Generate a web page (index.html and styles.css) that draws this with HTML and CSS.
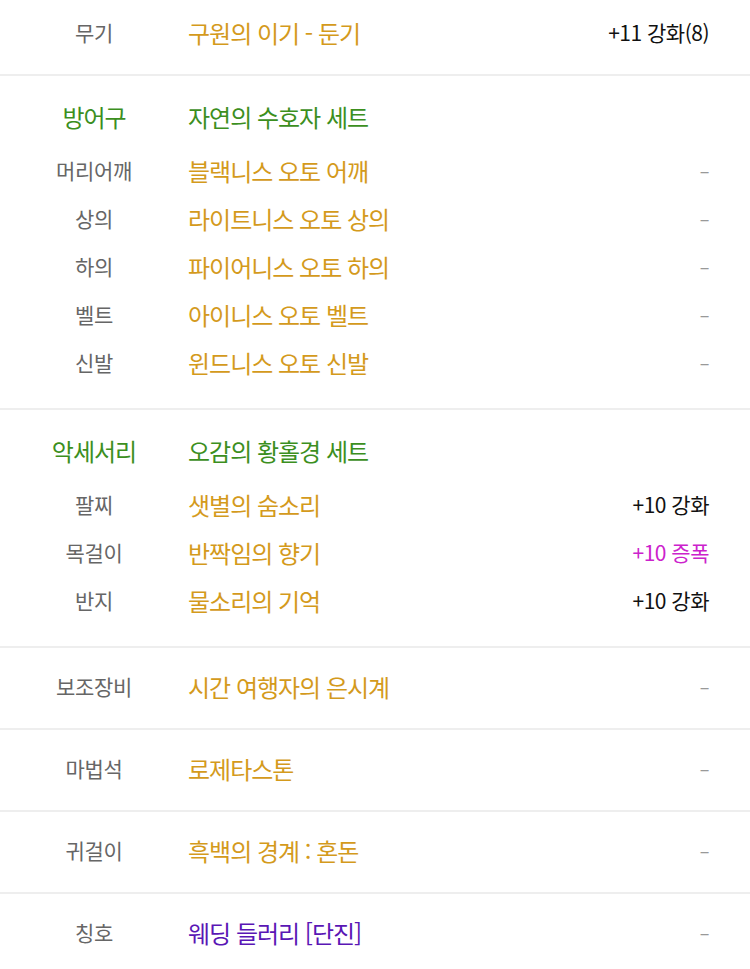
FILE: index.html
```html
<!DOCTYPE html>
<html lang="ko">
  <head>
    <meta charset="UTF-8" />
    <meta name="viewport" content="width=device-width, initial-scale=1.0" />
    <title>장비 정보</title>
    <link rel="stylesheet" href="styles.css">
  </head>
  <body>
    <div class="equip-list">
      <!-- 무기 -->
      <div class="group single">
        <div class="row">
          <span class="slot">무기</span>
          <span class="name gold">구원의 이기 - 둔기</span>
          <span class="value">+11 강화(8)</span>
        </div>
      </div>

      <!-- 방어구 세트 -->
      <div class="group set">
        <div class="row head">
          <span class="slot green">방어구</span>
          <span class="name green">자연의 수호자 세트</span>
          <span class="value"></span>
        </div>
        <div class="row">
          <span class="slot">머리어깨</span>
          <span class="name gold">블랙니스 오토 어깨</span>
          <span class="value dash">–</span>
        </div>
        <div class="row">
          <span class="slot">상의</span>
          <span class="name gold">라이트니스 오토 상의</span>
          <span class="value dash">–</span>
        </div>
        <div class="row">
          <span class="slot">하의</span>
          <span class="name gold">파이어니스 오토 하의</span>
          <span class="value dash">–</span>
        </div>
        <div class="row">
          <span class="slot">벨트</span>
          <span class="name gold">아이니스 오토 벨트</span>
          <span class="value dash">–</span>
        </div>
        <div class="row">
          <span class="slot">신발</span>
          <span class="name gold">윈드니스 오토 신발</span>
          <span class="value dash">–</span>
        </div>
      </div>

      <!-- 악세서리 세트 -->
      <div class="group set">
        <div class="row head">
          <span class="slot green">악세서리</span>
          <span class="name green">오감의 황홀경 세트</span>
          <span class="value"></span>
        </div>
        <div class="row">
          <span class="slot">팔찌</span>
          <span class="name gold">샛별의 숨소리</span>
          <span class="value">+10 강화</span>
        </div>
        <div class="row">
          <span class="slot">목걸이</span>
          <span class="name gold">반짝임의 향기</span>
          <span class="value amp">+10 증폭</span>
        </div>
        <div class="row">
          <span class="slot">반지</span>
          <span class="name gold">물소리의 기억</span>
          <span class="value">+10 강화</span>
        </div>
      </div>

      <div class="group single">
        <div class="row">
          <span class="slot">보조장비</span>
          <span class="name gold">시간 여행자의 은시계</span>
          <span class="value dash">–</span>
        </div>
      </div>

      <div class="group single">
        <div class="row">
          <span class="slot">마법석</span>
          <span class="name gold">로제타스톤</span>
          <span class="value dash">–</span>
        </div>
      </div>

      <div class="group single">
        <div class="row">
          <span class="slot">귀걸이</span>
          <span class="name gold">흑백의 경계 : 혼돈</span>
          <span class="value dash">–</span>
        </div>
      </div>

      <div class="group single last">
        <div class="row">
          <span class="slot">칭호</span>
          <span class="name purple">웨딩 들러리 [단진]</span>
          <span class="value dash">–</span>
        </div>
      </div>
    </div>
  </body>
</html>
```

FILE: styles.css
```css
/* Base */
* {
  margin: 0;
  padding: 0;
  box-sizing: border-box;
}

body {
  font-family: "Noto Sans CJK KR", "Noto Sans", sans-serif;
  background-color: #fff;
  color: #222;
  overflow: hidden;
}

/* List */
.equip-list {
  margin-top: -6px;
}

.group {
  border-bottom: 2px solid #eeeeee;
}

.group.single .row {
  height: 80px;
}

.group.set {
  padding: 18px 0 20px;
}

.group.set .row.head {
  margin-bottom: 6px;
}

.group.last {
  border-bottom: none;
}

.row {
  display: grid;
  grid-template-columns: 188px 1fr auto;
  align-items: center;
  height: 48px;
  padding-right: 41px;
  padding-bottom: 4px;
}

.slot {
  text-align: center;
  font-size: 21px;
  color: #666;
  letter-spacing: -0.3px;
}

.name {
  font-size: 24px;
  letter-spacing: -1px;
}

.value {
  font-size: 21px;
  color: #111;
  letter-spacing: -0.5px;
  text-align: right;
}

.value.dash {
  color: #999;
  font-size: 18px;
}

/* Colours */
.gold {
  color: #d49a1c;
}

.green {
  color: #3c8f1e;
}

.slot.green {
  font-size: 24px;
  letter-spacing: -1px;
}

.purple {
  color: #5a16b5;
}

.amp {
  color: #cc22cc;
}
```
